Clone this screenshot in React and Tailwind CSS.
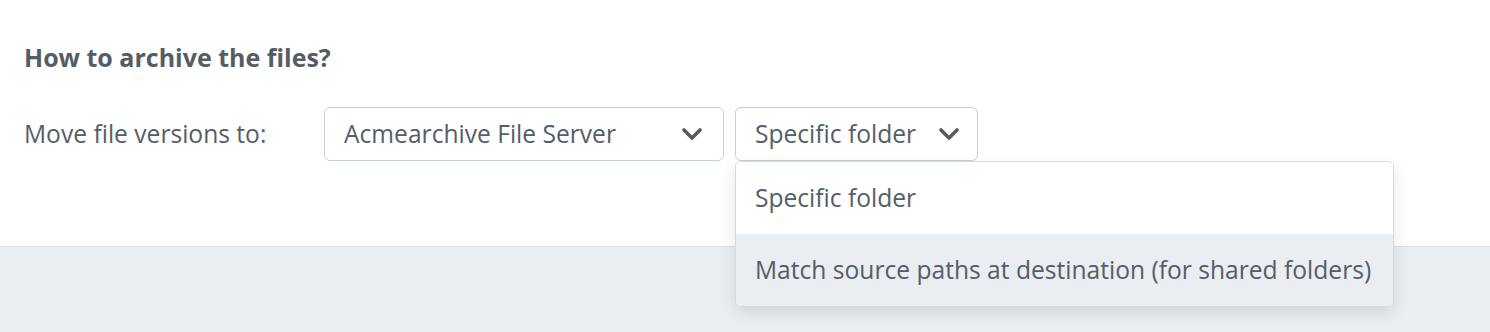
const Chevron = () => (
    <svg width="22" height="14" viewBox="0 0 22 14" fill="none" className="shrink-0">
        <polyline points="3,3 11,11 19,3" stroke="#555b61" strokeWidth="3.6" strokeLinecap="round" strokeLinejoin="round" />
    </svg>
);

const OPTIONS = ["Specific folder", "Match source paths at destination (for shared folders)"];

export default function App() {
    return (
        <div className="w-[1490px] h-[332px] flex flex-col bg-white text-[#555e68]" style={{ fontFamily: '"Open Sans", sans-serif' }}>
            <div className="h-[246px] px-6 pt-[40px]">
                <h2 className="text-[25px] leading-[34px] font-bold text-[#545d66]">How to archive the files?</h2>

                <div className="mt-[33px] flex items-center">
                    <label className="w-[300px] text-[24.6px]">Move file versions to:</label>

                    <button className="w-[400px] h-[54px] flex items-center justify-between pl-[19px] pr-5 border border-[#c7d0da] rounded-[6px] bg-white text-[24.6px]">
                        <span>Acmearchive File Server</span>
                        <Chevron />
                    </button>

                    <div className="relative ml-[11px]">
                        <button className="w-[243px] h-[54px] flex items-center justify-between pl-[19px] pr-[17px] border border-[#c7d0da] rounded-[6px] bg-white text-[24.6px]">
                            <span>Specific folder</span>
                            <Chevron />
                        </button>

                        {/* open menu */}
                        <ul className="absolute left-0 top-[54px] w-[659px] bg-white border border-[#d3dae2] rounded-[6px] shadow-[0_6px_16px_rgba(0,0,0,0.1)] overflow-hidden z-10">
                            {OPTIONS.map((opt, i) => (
                                <li
                                    key={opt}
                                    className={`h-[72px] flex items-center px-[19px] text-[24.6px] ${i === 1 ? "bg-[#eaedf1]" : "bg-white"}`}
                                >
                                    {opt}
                                </li>
                            ))}
                        </ul>
                    </div>
                </div>
            </div>

            <div className="flex-1 bg-[#eaedf1] border-t border-[#dadfe5]" />
        </div>
    );
}
